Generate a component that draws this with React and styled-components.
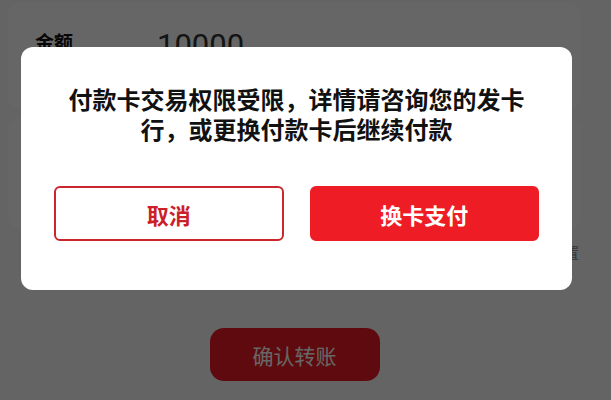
import React from 'react'
import styled, { createGlobalStyle } from 'styled-components'

const GlobalStyle = createGlobalStyle`
  html, body {
    margin: 0;
    padding: 0;
    background: #fafafa;
    font-family: 'Noto Sans CJK SC', 'Noto Sans', sans-serif;
  }
`

const Page = styled.div`
  width: 592px;
  height: 400px;
  padding: 3px 11px 0 8px;
  box-sizing: border-box;
  display: flex;
  flex-direction: column;
`

const Card = styled.div`
  background: #ffffff;
  border-radius: 12px;
  height: ${({ h }) => h}px;
  margin-top: ${({ mt }) => mt || 0}px;
  box-sizing: border-box;
`

const AmountRow = styled.div`
  display: flex;
  align-items: flex-start;
  padding: 26px 27px 0;
`

const Label = styled.span`
  width: 122px;
  margin-top: 1px;
  font-size: 19px;
  font-weight: 700;
  color: #111;
  line-height: 24px;
`

const Amount = styled.span`
  font-family: Roboto, 'Noto Sans', sans-serif;
  font-size: 31px;
  color: #333;
  line-height: 34px;
`

const Hint = styled.div`
  margin-top: 14px;
  text-align: right;
  padding-right: 2px;
  font-size: 14px;
  color: #888;
`

const ConfirmButton = styled.button`
  margin: 66px auto 0;
  width: 170px;
  height: 53px;
  border: none;
  border-radius: 14px;
  background: #ee1b24;
  color: #ffffff;
  font-family: inherit;
  font-size: 21px;
`

const Mask = styled.div`
  position: fixed;
  inset: 0;
  background: rgba(0, 0, 0, 0.6);
  display: flex;
  align-items: flex-start;
  padding: 47px 0 0 21px;
`

const Dialog = styled.div`
  width: 551px;
  height: 243px;
  background: #ffffff;
  border-radius: 12px;
  padding: 37px 33px 0;
  box-sizing: border-box;
`

const Message = styled.p`
  margin: 0;
  padding: 0 7px;
  font-size: 24px;
  font-weight: 700;
  line-height: 30px;
  color: #111;
  text-align: center;
`

const Actions = styled.div`
  margin-top: 42px;
  display: grid;
  grid-template-columns: 1fr 1fr;
  gap: 26px;
`

const ActionButton = styled.button`
  height: 55px;
  border-radius: 6px;
  box-sizing: border-box;
  font-family: inherit;
  font-size: 22px;
  font-weight: 700;
  border: 2px solid ${({ primary }) => (primary ? '#ee1c25' : '#c9262d')};
  background: ${({ primary }) => (primary ? '#ee1c25' : '#ffffff')};
  color: ${({ primary }) => (primary ? '#ffffff' : '#cc2029')};
`

export default function App() {
  return (
    <>
      <GlobalStyle />
      <Page>
        <Card h={106}>
          <AmountRow>
            <Label>金额</Label>
            <Amount>10000</Amount>
          </AmountRow>
        </Card>
        <Card h={110} mt={9} />
        <Hint>单笔限额5万元，可前往设置</Hint>
        <ConfirmButton>确认转账</ConfirmButton>
      </Page>
      <Mask>
        <Dialog>
          <Message>付款卡交易权限受限，详情请咨询您的发卡行，或更换付款卡后继续付款</Message>
          <Actions>
            <ActionButton>取消</ActionButton>
            <ActionButton primary>换卡支付</ActionButton>
          </Actions>
        </Dialog>
      </Mask>
    </>
  )
}
